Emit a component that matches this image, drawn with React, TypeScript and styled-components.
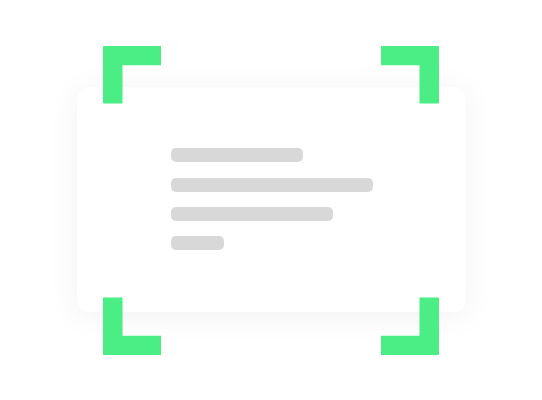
import React from "react";
import styled, { createGlobalStyle } from "styled-components";

const Global = createGlobalStyle`
  html, body { margin: 0; padding: 0; background: #fff; }
`;

const Stage = styled.div`
  width: 542px;
  height: 400px;
  display: flex;
  align-items: center;
  justify-content: center;
  overflow: hidden;
`;

const Card = styled.div`
  position: relative;
  box-sizing: border-box;
  width: 389px;
  height: 224.4px;
  margin-top: -1px;
  padding: 61px 0 0 94.5px;
  background: #fff;
  border-radius: 12px;
  box-shadow: 0 4px 32px rgba(0, 0, 0, 0.06);
  display: flex;
  flex-direction: column;
  gap: 15.4px;
`;

const Bar = styled.div<{ $w: number }>`
  width: ${(p) => p.$w}px;
  height: 14px;
  background: #d8d8d8;
  border-radius: 5px;
`;

const Bracket = styled.svg<{ $v: "top" | "bottom"; $h: "left" | "right" }>`
  position: absolute;
  width: 58px;
  height: 58px;
  ${(p) => (p.$v === "top" ? "top: -41.8px;" : "bottom: -43.4px;")}
  ${(p) => (p.$h === "left" ? "left: 26.5px;" : "right: 26.5px;")}
  transform: scale(${(p) => (p.$h === "left" ? 1 : -1)}, ${(p) => (p.$v === "top" ? 1 : -1)});
`;

const Corner = ({ v, h }: { v: "top" | "bottom"; h: "left" | "right" }) => (
  <Bracket $v={v} $h={h} viewBox="0 0 58 58">
    <path
      d="M1 0H58V19.2H19.5V57.4H1A1 1 0 0 1 0 56.4V1A1 1 0 0 1 1 0Z"
      fill="#4bee84"
    />
  </Bracket>
);

export default function App() {
  return (
    <Stage>
      <Global />
      <Card>
        <Bar $w={131.5} />
        <Bar $w={201.5} />
        <Bar $w={161.5} />
        <Bar $w={53} />
        <Corner v="top" h="left" />
        <Corner v="top" h="right" />
        <Corner v="bottom" h="left" />
        <Corner v="bottom" h="right" />
      </Card>
    </Stage>
  );
}
